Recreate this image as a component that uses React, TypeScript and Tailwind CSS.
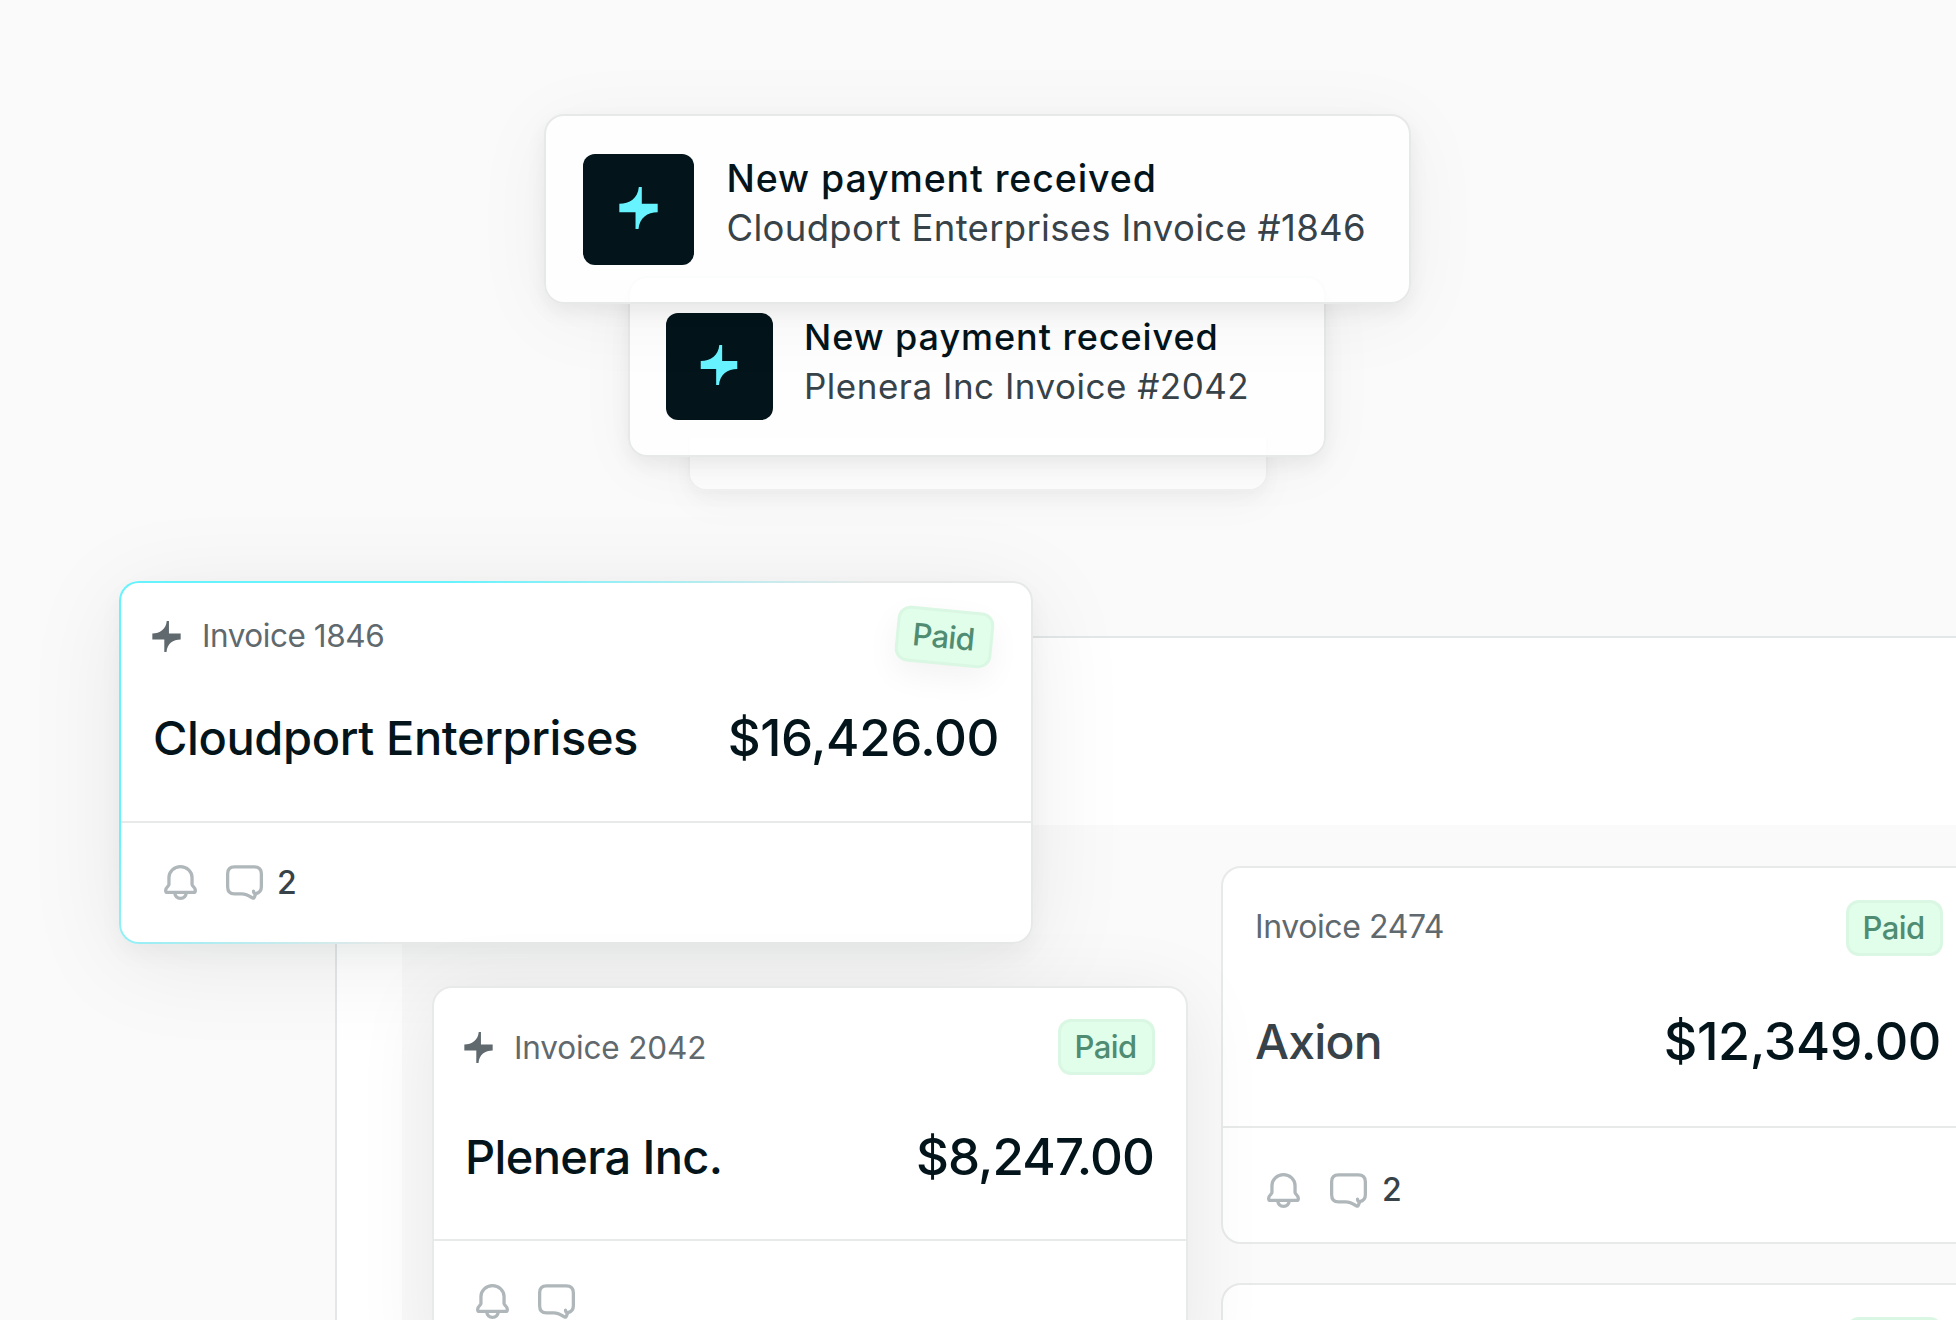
import type { ReactNode } from "react";
import clsx from "clsx";

type IconProps = {
  className?: string;
};

type Invoice = {
  number: string;
  company: string;
  amount: string;
  starred?: boolean;
  comments?: number;
};

const featured: Invoice = {
  number: "Invoice 1846",
  company: "Cloudport Enterprises",
  amount: "$16,426.00",
  starred: true,
  comments: 2,
};

const plenera: Invoice = {
  number: "Invoice 2042",
  company: "Plenera Inc.",
  amount: "$8,247.00",
  starred: true,
};

const axion: Invoice = {
  number: "Invoice 2474",
  company: "Axion",
  amount: "$12,349.00",
  comments: 2,
};

const Spark = ({ className }: IconProps) => (
  <svg viewBox="0 0 116 127" fill="currentColor" className={className}>
    <path d="M0 51C31 51 56 34 59 0H68V51H116V76C85 76 61 93 58 127H49V76H0Z" />
  </svg>
);

const Bell = ({ className }: IconProps) => (
  <svg
    viewBox="0 0 100 106"
    fill="none"
    stroke="currentColor"
    strokeWidth="10"
    strokeLinejoin="round"
    className={className}
  >
    <path d="M15 38A35 33 0 0 1 85 38V59C85 65 95 67 95 77C95 81 93 83 90 83H10C7 83 5 81 5 77C5 67 15 65 15 59Z" />
    <path d="M32 83C34 95 41 101 50 101C59 101 66 95 68 83" />
  </svg>
);

const Chat = ({ className }: IconProps) => (
  <svg
    viewBox="0 0 113 106"
    fill="none"
    stroke="currentColor"
    strokeWidth="10"
    strokeLinecap="round"
    strokeLinejoin="round"
    className={className}
  >
    <path d="M84 79C84 84 87 87 91 87C101 85 108 78 108 66V26Q108 5 86 5H26Q5 5 5 26V66Q5 88 26 88H48C62 88 72 95 81 100Q86 102 87 97L91 87" />
  </svg>
);

const Badge = ({
  className,
  children,
}: IconProps & { children?: ReactNode }) => (
  <span
    className={clsx(
      "flex h-14 w-[97px] items-center justify-center rounded-[13px] border-[3px] border-[#d9f7e2] bg-[#e0feea] pr-0.5 text-[31px] font-medium tracking-[-0.6px] text-[#4f8c72]",
      className
    )}
  >
    {children}
  </span>
);

type CardProps = {
  invoice: Invoice;
  className?: string;
  headerClass: string;
  numberClass: string;
  bodyClass: string;
  nameClass: string;
  amountClass: string;
  footerClass: string;
  badgeClass?: string;
};

const InvoiceCard = ({
  invoice,
  className,
  headerClass,
  numberClass,
  bodyClass,
  nameClass,
  amountClass,
  footerClass,
  badgeClass,
}: CardProps) => (
  <article className={clsx("flex flex-col rounded-[20px] border-2", className)}>
    <div className={clsx("flex items-center", headerClass)}>
      {invoice.starred && (
        <Spark className="mr-[21px] h-[31px] w-[29px] text-[#5f696e]" />
      )}
      <span className={clsx("text-[#5f696e]", numberClass)}>
        {invoice.number}
      </span>
      <Badge className={clsx("ml-auto", badgeClass)}>Paid</Badge>
    </div>
    <div className={clsx("flex items-center justify-between", bodyClass)}>
      <span className={clsx("font-medium", nameClass)}>{invoice.company}</span>
      <span className={clsx("font-medium", amountClass)}>{invoice.amount}</span>
    </div>
    <div
      className={clsx(
        "flex items-center border-t-2 border-[#e8e9e9] text-[#b0b7ba]",
        footerClass
      )}
    >
      <Bell className="h-[35px] w-[33px]" />
      <Chat className="ml-[29px] h-[35px] w-[37px]" />
      {invoice.comments && (
        <span className="ml-3.5 text-[32px] font-medium text-[#374249]">
          {invoice.comments}
        </span>
      )}
    </div>
  </article>
);

const Toasts = () => (
  <section className="flex h-[636px] flex-col items-center pt-[114px] pr-0.5">
    <div className="z-30 flex h-[190px] w-[867px] shrink-0 items-start rounded-[20px] border-2 border-[#e7e8e8] bg-white/85 bg-clip-padding pt-[38px] pl-[37px] shadow-[0_8px_20px_rgba(4,20,26,0.06),0_12px_80px_rgba(4,20,26,0.05)]">
      <div className="flex size-[111px] items-center justify-center rounded-xl bg-[#03141a] pb-[3px]">
        <Spark className="h-[42px] w-[39px] text-[#67f3ff]" />
      </div>
      <div className="ml-[33px] whitespace-nowrap text-[36.5px]/[50px]">
        <p className="text-[37.5px] font-medium tracking-[0.9px]">
          New payment received
        </p>
        <p className="-mt-px tracking-[0.3px] text-[#374249]">
          Cloudport Enterprises Invoice #1846
        </p>
      </div>
    </div>
    <div className="z-20 -mt-7 flex h-[181px] w-[698px] shrink-0 items-start rounded-[19px] border-2 border-[#e7e8e8] bg-white/85 bg-clip-padding pt-[35px] pl-9 shadow-[0_8px_20px_rgba(4,20,26,0.06),0_12px_60px_rgba(4,20,26,0.04)]">
      <div className="flex size-[107px] items-center justify-center rounded-xl bg-[#03141a] pr-0.5 pb-[3px]">
        <Spark className="h-10 w-[38px] text-[#67f3ff]" />
      </div>
      <div className="ml-[31px] whitespace-nowrap text-[35px]/[48px]">
        <p className="text-[36px] font-medium tracking-[0.95px]">
          New payment received
        </p>
        <p className="mt-px tracking-[0.5px] text-[#374249]">
          Plenera Inc Invoice #2042
        </p>
      </div>
    </div>
    <div className="z-10 -mt-[19px] ml-0.5 h-[53px] w-[580px] shrink-0 rounded-b-[18px] border-2 border-t-0 border-[#f1f1f1] bg-white/50 shadow-[0_6px_16px_rgba(4,20,26,0.03),0_12px_40px_rgba(4,20,26,0.03)]" />
  </section>
);

const App = () => {
  return (
    <main className="relative h-[1320px] w-[1956px] overflow-hidden bg-[#fafafa] font-['Inter',sans-serif] text-[#03141a]">
      <Toasts />

      {/* Board */}
      <section className="ml-[335px] h-[684px] border-t-2 border-l-2 border-[#e4e7e8] bg-white">
        <div className="h-[187px]" />
        <div className="ml-[65px] flex h-[495px] items-start gap-[33px] bg-[#fafafa] pl-[30px]">
          <InvoiceCard
            invoice={plenera}
            className="relative z-20 mt-[161px] h-[380px] w-[756px] shrink-0 border-[#e8e9e9] bg-white shadow-[0_12px_80px_rgba(4,20,26,0.08)]"
            headerClass="mt-[31px] h-14 pr-[31px] pl-[30px]"
            numberClass="pt-px text-[31.5px] tracking-[-0.15px]"
            bodyClass="mt-[55px] h-[54px] pr-8 pl-[31px] mb-[55px]"
            nameClass="text-[47px]/[54px] tracking-[-0.65px]"
            amountClass="text-[51px]/[54px] tracking-[-0.9px]"
            footerClass="h-[122px] pl-[42px]"
          />
          <div className="flex shrink-0 flex-col gap-[39px] pt-[41px]">
            <InvoiceCard
              invoice={axion}
              className="h-[378px] w-[756px] border-[#e8e9e9] bg-white"
              headerClass="mt-8 h-14 pr-8 pl-8"
              numberClass="pb-0.5 text-[32px] tracking-[-0.4px]"
              bodyClass="mt-[59px] h-[54px] pr-[34px] pl-8 mb-[57px]"
              nameClass="text-[48px]/[54px] tracking-[-0.8px] text-[#374249]"
              amountClass="text-[52px]/[54px] tracking-[-0.4px]"
              footerClass="h-[126px] gap-x-px pt-2.5 pl-11"
            />
            <div className="flex h-[180px] w-[756px] justify-end rounded-[20px] border-2 border-[#e8e9e9] bg-white pt-8 pr-8">
              <Badge />
            </div>
          </div>
        </div>
      </section>

      {/* Highlighted card floating over the board */}
      <InvoiceCard
        invoice={featured}
        className="absolute top-[581px] left-[119px] z-10 h-[363px] w-[914px] border-transparent shadow-[0_10px_24px_rgba(4,20,26,0.04),0_16px_100px_rgba(4,20,26,0.08)] [background:linear-gradient(#fff,#fff)_padding-box,linear-gradient(143deg,#67f3fd_24%,#e7e8e8_54%)_border-box]"
        headerClass="mt-[25px] h-14 pr-[38px] pl-[31px]"
        numberClass="text-[31.5px] tracking-[-0.45px]"
        bodyClass="mt-[47px] h-[54px] pr-8 pl-8 mb-[56px]"
        nameClass="text-[47px]/[54px] tracking-[-0.4px]"
        amountClass="text-[51px]/[54px] tracking-[-0.4px]"
        footerClass="h-[121px] pl-[43px]"
        badgeClass="relative top-px rotate-[5.5deg] shadow-[0_12px_32px_rgba(4,20,26,0.05)]"
      />
    </main>
  );
};

export default App;
